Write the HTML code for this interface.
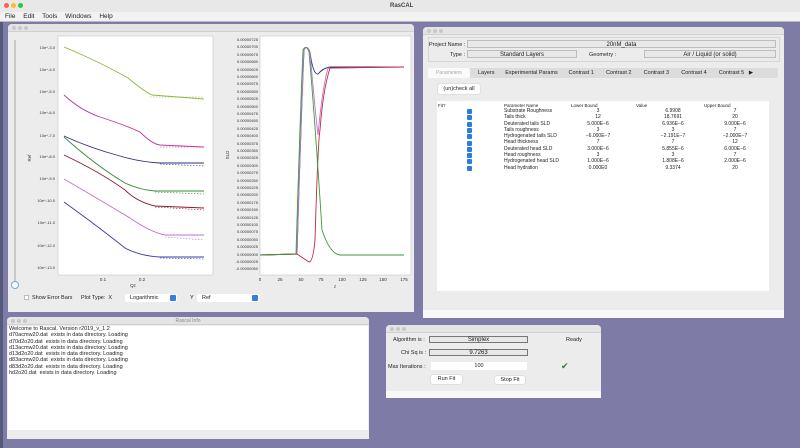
<!DOCTYPE html>
<html><head><meta charset="utf-8"><style>
*{margin:0;padding:0;box-sizing:border-box}
body{width:800px;height:448px;overflow:hidden;background:#7e7ba7;font-family:"Liberation Sans",sans-serif;position:relative;font-size:6px;color:#222}
.a{position:absolute}
.win{position:absolute;background:#ececec;border-radius:4px 4px 0 0;overflow:hidden}
.tb{position:absolute;left:0;right:0;top:0;height:8px;background:#e4e4e4;border-bottom:1px solid #d0d0d0}
.dots{position:absolute;left:4px;top:2px}
.dots i{display:inline-block;width:4px;height:4px;border-radius:50%;background:#c8c8c8;margin-right:2px}
.fld{position:absolute;background:#e8e8e8;border:1px solid #bdbdbd;text-align:center;font-size:6px;line-height:8px}
.cb{position:absolute;left:467px;width:5px;height:5px;background:#2a7ce0;border-radius:1px}
.btn{position:absolute;background:#fff;border-radius:2px;box-shadow:0 0 1px #999;text-align:center;font-size:5.5px}
</style></head><body>
<div class="a" style="left:0;top:0;width:800px;height:12px;background:#e8e8e8"></div>
<div class="a" style="left:4px;top:3px"><span style="display:inline-block;width:5px;height:5px;border-radius:50%;background:#fe5f57;margin-right:2px"></span><span style="display:inline-block;width:5px;height:5px;border-radius:50%;background:#febc2e;margin-right:2px"></span><span style="display:inline-block;width:5px;height:5px;border-radius:50%;background:#28c840"></span></div>
<div class="a" style="left:390px;top:3px;font-size:6px;font-weight:bold;color:#444">RasCAL</div>
<div class="a" style="left:0;top:12px;width:800px;height:10px;background:#f2f2f2;border-bottom:1px solid #bbb"></div>
<div class="a" style="left:5px;top:13px;font-size:6.5px;word-spacing:6px">File Edit Tools Windows Help</div>
<div class="a" style="left:0;top:22px;width:3px;height:426px;background:#555a7a"></div>

<div class="win" style="left:8px;top:24px;width:406px;height:288px">
<div class="tb"><div class="dots"><i></i><i></i><i></i></div></div>
</div>
<div class="a" style="left:14px;top:40px;width:2px;height:245px;background:#c9c9c9"></div>
<div class="a" style="left:11px;top:281px;width:8px;height:8px;border-radius:50%;background:#fff;border:1px solid #6fa6e0"></div>
<svg class="a" style="left:8px;top:24px" width="406" height="288" viewBox="8 24 406 288">
<rect x="58" y="36" width="155" height="239" fill="#fff" stroke="#bbb" stroke-width="0.5"/>
<rect x="260" y="36" width="151" height="239" fill="#fff" stroke="#bbb" stroke-width="0.5"/>
<g font-family="Liberation Sans" font-size="4" fill="#333" text-anchor="end">
<text x="55" y="49">10e^-3.0</text><text x="55" y="71">10e^-4.0</text><text x="55" y="93">10e^-5.0</text><text x="55" y="114">10e^-6.0</text><text x="55" y="137">10e^-7.0</text><text x="55" y="158">10e^-8.0</text><text x="55" y="180">10e^-9.0</text><text x="55" y="202">10e^-10.0</text><text x="55" y="224">10e^-11.0</text><text x="55" y="247">10e^-12.0</text><text x="55" y="269">10e^-13.0</text>
</g>
<g font-family="Liberation Sans" font-size="4" fill="#333" text-anchor="end">
<text x="258" y="41">0.00000725</text><text x="258" y="48">0.00000700</text><text x="258" y="56">0.00000675</text><text x="258" y="63">0.00000650</text><text x="258" y="71">0.00000625</text><text x="258" y="78">0.00000600</text><text x="258" y="85">0.00000575</text><text x="258" y="93">0.00000550</text><text x="258" y="100">0.00000525</text><text x="258" y="108">0.00000500</text><text x="258" y="115">0.00000475</text><text x="258" y="122">0.00000450</text><text x="258" y="130">0.00000425</text><text x="258" y="137">0.00000400</text><text x="258" y="145">0.00000375</text><text x="258" y="152">0.00000350</text><text x="258" y="159">0.00000325</text><text x="258" y="167">0.00000300</text><text x="258" y="174">0.00000275</text><text x="258" y="182">0.00000250</text><text x="258" y="189">0.00000225</text><text x="258" y="196">0.00000200</text><text x="258" y="204">0.00000175</text><text x="258" y="211">0.00000150</text><text x="258" y="219">0.00000125</text><text x="258" y="226">0.00000100</text><text x="258" y="233">0.00000075</text><text x="258" y="241">0.00000050</text><text x="258" y="248">0.00000025</text><text x="258" y="256">0.00000000</text><text x="258" y="263">-0.00000025</text><text x="258" y="270">-0.00000050</text>
</g>
<g font-family="Liberation Sans" font-size="4.5" fill="#333" text-anchor="middle">
<text x="103" y="281">0.1</text><text x="142" y="281">0.2</text><text x="133" y="287">Qz</text>
<text x="260" y="281">0</text><text x="280" y="281">25</text><text x="301" y="281">50</text><text x="321" y="281">75</text><text x="342" y="281">100</text><text x="363" y="281">125</text><text x="383" y="281">150</text><text x="404" y="281">175</text><text x="335" y="288">z</text>
<text x="31" y="158" transform="rotate(-90 31 158)">Ref</text>
<text x="229" y="155" transform="rotate(-90 229 155)">SLD</text>
</g>
<g fill="none" stroke-width="0.9">
<path d="M64 47 Q100 62 128 78 Q145 92 152 95 L204 99" stroke="#8ab83a"/>
<path d="M64 95 Q80 110 100 117 Q125 125 140 132 Q152 144 160 145 L204 147" stroke="#c0399a"/>
<path d="M64 136 Q90 148 120 156 Q140 162 160 163 L204 163" stroke="#2b2f7a"/>
<path d="M64 137 Q95 165 125 183 Q140 190 155 191 L204 191" stroke="#3a8a3a"/>
<path d="M64 155 Q100 172 125 190 Q137 202 155 206 L204 208" stroke="#8a1a2e"/>
<path d="M64 179 Q100 200 130 218 Q150 232 165 235 L204 235" stroke="#c070d0"/>
<path d="M64 202 Q100 228 125 248 Q140 256 160 257 L204 257" stroke="#3a3ab0"/>
</g>
<g fill="none" stroke-width="0.6" stroke-dasharray="1.5 1.5">
<path d="M150 97 L204 97" stroke="#8ab83a"/><path d="M160 147 L204 147" stroke="#c0399a"/><path d="M160 164 L204 166" stroke="#2b2f7a"/><path d="M155 192 L204 194" stroke="#3a8a3a"/><path d="M155 207 L204 210" stroke="#8a1a2e"/><path d="M165 237 L204 240" stroke="#c070d0"/><path d="M160 258 L204 259" stroke="#3a3ab0"/>
</g>
<g fill="none" stroke-width="0.9">
<path d="M260 255 L297 254 Q301 120 304 50 Q307 44 310 52 Q313 75 318 74 Q323 68 330 67 L404 67" stroke="#2b2f7a"/>
<path d="M260 255 L297 254 Q301 120 304 50 Q307 44 310 52 Q315 110 318 135 Q322 90 328 68 L404 67" stroke="#c070d0"/>
<path d="M260 255 L297 254 Q303 258 309 262 Q313 262 315 240 Q318 140 320 130 Q323 90 330 68 L404 67" stroke="#c8283c"/>
<path d="M260 255 L296 254 Q300 120 303 50 Q306 44 309 52 Q315 120 322 230 Q330 254 340 255 L404 255" stroke="#3a9a3a"/>
</g>
</svg>
<div class="a" style="left:24px;top:295px;width:5px;height:5px;background:#fff;border:1px solid #bbb"></div>
<div class="a" style="left:32px;top:295px;font-size:5.5px">Show Error Bars</div>
<div class="a" style="left:81px;top:295px;font-size:5.5px">Plot Type: &nbsp;X</div>
<div class="a" style="left:125px;top:294px;width:52px;height:8px;background:#fff;border-radius:2px;font-size:5.5px;padding-left:5px;line-height:8px">Logarithmic</div>
<div class="a" style="left:170px;top:295px;width:6px;height:6px;background:#3a7be0;border-radius:1px"></div>
<div class="a" style="left:190px;top:295px;font-size:5.5px">Y</div>
<div class="a" style="left:197px;top:294px;width:63px;height:8px;background:#fff;border-radius:2px;font-size:5.5px;padding-left:5px;line-height:8px">Ref</div>
<div class="a" style="left:252px;top:295px;width:6px;height:6px;background:#3a7be0;border-radius:1px"></div>

<div class="win" style="left:423px;top:27px;width:361px;height:291px">
<div class="tb"><div class="dots"><i></i><i></i><i></i></div></div>
</div>
<div class="a" style="left:428px;top:37px;width:352px;height:25px;border:1px solid #d6d6d6"></div>
<div class="a" style="left:429px;top:42px;font-size:5.5px">Project Name :</div>
<div class="fld" style="left:467px;top:40px;width:309px;height:8px">20nM_data</div>
<div class="a" style="left:450px;top:52px;font-size:5.5px">Type :</div>
<div class="fld" style="left:467px;top:50px;width:110px;height:8px">Standard Layers</div>
<div class="a" style="left:589px;top:52px;font-size:5.5px">Geometry :</div>
<div class="fld" style="left:644px;top:50px;width:132px;height:8px">Air / Liquid (or solid)</div>
<div class="a" style="left:428px;top:68px;width:350px;height:10px;background:#dcdcdc;border-radius:2px"></div>
<div class="a" style="left:428px;top:68px;width:42px;height:10px;background:#fafafa;border-radius:2px;font-size:5px;color:#aaa;text-align:center;line-height:10px">Parameters</div>
<div class="a" style="left:478px;top:70px;font-size:5.5px;white-space:nowrap">Layers&nbsp;&nbsp;&nbsp;&nbsp;&nbsp;&nbsp;&nbsp;Experimental Params&nbsp;&nbsp;&nbsp;&nbsp;&nbsp;&nbsp;&nbsp;Contrast 1&nbsp;&nbsp;&nbsp;&nbsp;&nbsp;&nbsp;&nbsp;&nbsp;Contrast 2&nbsp;&nbsp;&nbsp;&nbsp;&nbsp;&nbsp;&nbsp;&nbsp;Contrast 3&nbsp;&nbsp;&nbsp;&nbsp;&nbsp;&nbsp;&nbsp;&nbsp;Contrast 4&nbsp;&nbsp;&nbsp;&nbsp;&nbsp;&nbsp;&nbsp;&nbsp;Contrast 5&nbsp;&nbsp;&nbsp;▶</div>
<div class="btn" style="left:438px;top:84px;width:42px;height:10px;line-height:10px">(un)check all</div>
<div class="a" style="left:437px;top:101px;width:332px;height:190px;background:#fff"></div>
<div class="a" style="left:438px;top:103px;font-size:4.5px">Fit?</div>
<div class="a" style="left:504px;top:103px;font-size:4.5px">Parameter Name</div>
<div class="a" style="left:571px;top:103px;font-size:4.5px">Lower Bound</div>
<div class="a" style="left:636px;top:103px;font-size:4.5px">Value</div>
<div class="a" style="left:704px;top:103px;font-size:4.5px">Upper Bound</div>
<div class="a" style="left:0;top:108px;font-size:5px;line-height:6.3px">
<div class="a" style="left:504px;width:80px;white-space:nowrap">Substrate Roughness<br>Tails thick<br>Deuterated tails SLD<br>Tails roughness<br>Hydrogenated tails SLD<br>Head thickness<br>Deuterated head SLD<br>Head roughness<br>Hydrogenated head SLD<br>Head hydration</div>
<div class="a" style="left:578px;width:40px;text-align:center">3<br>12<br>5.000E−6<br>3<br>−6.000E−7<br>7<br>3.000E−6<br>3<br>1.000E−6<br>0.000E0</div>
<div class="a" style="left:653px;width:40px;text-align:center">6.9908<br>18.7691<br>6.936E−6<br>3<br>−2.191E−7<br>7<br>5.855E−6<br>3<br>1.808E−6<br>9.3374</div>
<div class="a" style="left:715px;width:40px;text-align:center">7<br>20<br>9.000E−6<br>7<br>−2.000E−7<br>12<br>6.000E−6<br>7<br>2.000E−6<br>20</div>
</div>
<div class="cb" style="top:109px"></div><div class="cb" style="top:115.3px"></div><div class="cb" style="top:121.6px"></div><div class="cb" style="top:127.9px"></div><div class="cb" style="top:134.2px"></div><div class="cb" style="top:140.5px"></div><div class="cb" style="top:146.8px"></div><div class="cb" style="top:153.1px"></div><div class="cb" style="top:159.4px"></div><div class="cb" style="top:165.7px"></div>
<div class="a" style="left:423px;top:310px;width:361px;height:8px;background:#f8f8f8"></div>

<div class="win" style="left:7px;top:317px;width:362px;height:122px">
<div class="tb"><div class="dots"><i></i><i></i><i></i></div><div class="a" style="left:0;right:0;top:1px;text-align:center;font-size:5px;color:#888">Rascal Info</div></div>
</div>
<div class="a" style="left:8px;top:326px;width:360px;height:104px;background:#fff;font-size:5.5px;line-height:6.3px;padding-left:1px;white-space:pre">Welcome to Rascal. Version r2019_v_1.2
d70acmw20.dat  exists in data directory. Loading
d70d2o20.dat  exists in data directory. Loading
d13acmw20.dat  exists in data directory. Loading
d13d2o20.dat  exists in data directory. Loading
d83acmw20.dat  exists in data directory. Loading
d83d2o20.dat  exists in data directory. Loading
hd2o20.dat  exists in data directory. Loading</div>

<div class="win" style="left:386px;top:325px;width:215px;height:73px">
<div class="tb"><div class="dots"><i></i><i></i><i></i></div></div>
</div>
<div class="a" style="left:393px;top:337px;font-size:5.5px">Algorithm is :</div>
<div class="fld" style="left:429px;top:336px;width:99px;height:7px;line-height:6px;border-color:#777">Simplex</div>
<div class="a" style="left:566px;top:337px;font-size:5.5px">Ready</div>
<div class="a" style="left:401px;top:350px;font-size:5.5px">Chi Sq is :</div>
<div class="fld" style="left:429px;top:349px;width:99px;height:7px;line-height:6px;border-color:#777">9.7263</div>
<div class="a" style="left:388px;top:364px;font-size:5.5px">Max Iterations :</div>
<div class="a" style="left:431px;top:362px;width:96px;height:8px;background:#fff;text-align:center;font-size:5.5px;line-height:8px">100</div>
<div class="a" style="left:561px;top:361px;font-size:9px;color:#2a7a3a">✔</div>
<div class="btn" style="left:431px;top:375px;width:31px;height:9px;line-height:9px">Run Fit</div>
<div class="btn" style="left:495px;top:376px;width:30px;height:8px;line-height:8px">Stop Fit</div>
<div class="a" style="left:386px;top:391px;width:215px;height:7px;background:#f8f8f8"></div>
</body></html>
